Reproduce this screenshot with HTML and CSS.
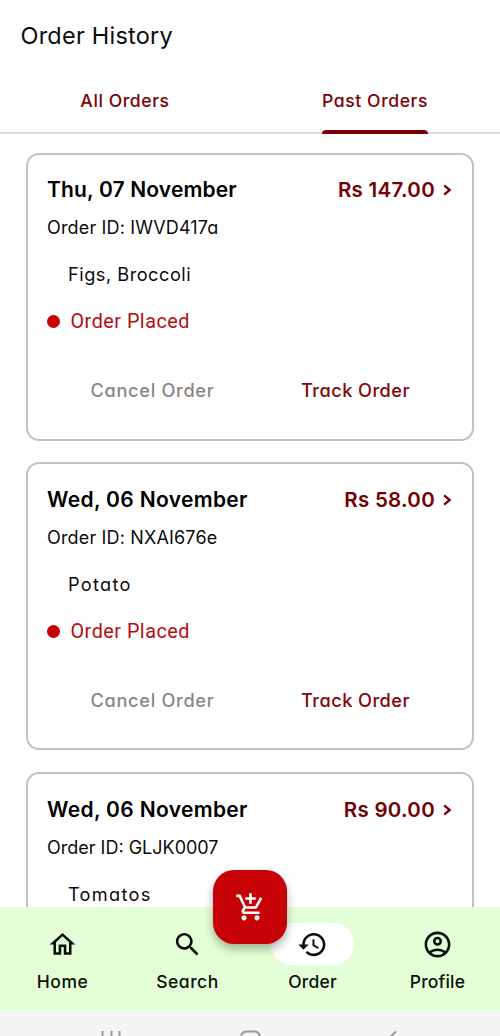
FILE: index.html
```html
<!DOCTYPE html>
<html lang="en">
<head>
    <meta charset="UTF-8">
    <meta name="viewport" content="width=device-width, initial-scale=1.0">
    <title>Order History</title>
    <link rel="stylesheet" href="styles.css">
</head>
<body>
    <div class="app">
        <header class="header">
            <h1>Order History</h1>
        </header>

        <div class="tabs">
            <div class="tab"><span class="tab-label">All Orders</span></div>
            <div class="tab"><span class="tab-label active">Past Orders</span></div>
        </div>

        <main class="orders">
            <div class="order-card">
                <div class="order-top">
                    <h2 class="date-thu">Thu, 07 November</h2>
                    <div class="price"><span>Rs 147.00</span><svg class="chevron" viewBox="0 0 10 12"><path d="M1.2 1.4 L6.7 6 L1.2 10.6"/></svg></div>
                </div>
                <div class="order-id">Order ID: IWVD417a</div>
                <div class="items">Figs, Broccoli</div>
                <div class="order-status"><span class="dot"></span><span>Order Placed</span></div>
                <div class="actions">
                    <button class="cancel-btn" disabled>Cancel Order</button>
                    <button class="track-btn">Track Order</button>
                </div>
            </div>

            <div class="order-card">
                <div class="order-top">
                    <h2>Wed, 06 November</h2>
                    <div class="price"><span>Rs 58.00</span><svg class="chevron" viewBox="0 0 10 12"><path d="M1.2 1.4 L6.7 6 L1.2 10.6"/></svg></div>
                </div>
                <div class="order-id">Order ID: NXAI676e</div>
                <div class="items single">Potato</div>
                <div class="order-status"><span class="dot"></span><span>Order Placed</span></div>
                <div class="actions">
                    <button class="cancel-btn" disabled>Cancel Order</button>
                    <button class="track-btn">Track Order</button>
                </div>
            </div>

            <div class="order-card">
                <div class="order-top">
                    <h2>Wed, 06 November</h2>
                    <div class="price"><span>Rs 90.00</span><svg class="chevron" viewBox="0 0 10 12"><path d="M1.2 1.4 L6.7 6 L1.2 10.6"/></svg></div>
                </div>
                <div class="order-id tight">Order ID: GLJK0007</div>
                <div class="items single">Tomatos</div>
            </div>
        </main>

        <nav class="bottom-nav">
            <div class="nav-item">
                <div class="nav-icon">
                    <svg viewBox="0 0 24 24"><path d="M12 5.69l5 4.5V18h-2v-6H9v6H7v-7.81l5-4.5M12 3L2 12h3v8h6v-6h2v6h6v-8h3L12 3z"/></svg>
                </div>
                <span>Home</span>
            </div>
            <div class="nav-item">
                <div class="nav-icon">
                    <svg viewBox="0 0 24 24"><path d="M15.5 14h-.79l-.28-.27C15.41 12.59 16 11.11 16 9.5 16 5.91 13.09 3 9.5 3S3 5.91 3 9.5 5.91 16 9.5 16c1.61 0 3.09-.59 4.23-1.57l.27.28v.79l5 4.99L20.49 19l-4.99-5zm-6 0C7.01 14 5 11.99 5 9.5S7.01 5 9.5 5 14 7.01 14 9.5 11.99 14 9.5 14z"/></svg>
                </div>
                <span>Search</span>
            </div>
            <div class="nav-item">
                <div class="nav-icon selected">
                    <svg viewBox="0 0 24 24"><path d="M13 3c-4.97 0-9 4.03-9 9H1l3.89 3.89.07.14L9 12H6c0-3.87 3.13-7 7-7s7 3.13 7 7-3.13 7-7 7c-1.93 0-3.68-.79-4.94-2.06l-1.42 1.42C8.27 19.99 10.51 21 13 21c4.97 0 9-4.03 9-9s-4.03-9-9-9zm-1 5v5l4.28 2.54.72-1.21-3.5-2.08V8H12z"/></svg>
                </div>
                <span class="tight">Order</span>
            </div>
            <div class="nav-item">
                <div class="nav-icon">
                    <svg viewBox="0 0 24 24"><path d="M12 2C6.48 2 2 6.48 2 12s4.48 10 10 10 10-4.48 10-10S17.52 2 12 2zM7.35 18.5C8.66 17.56 10.26 17 12 17s3.34.56 4.65 1.5C15.34 19.44 13.74 20 12 20s-3.34-.56-4.65-1.5zm10.79-1.38C16.45 15.8 14.32 15 12 15s-4.45.8-6.14 2.12C4.7 15.73 4 13.95 4 12c0-4.42 3.58-8 8-8s8 3.58 8 8c0 1.95-.7 3.73-1.86 5.12zM12 6c-1.93 0-3.5 1.57-3.5 3.5S10.07 13 12 13s3.5-1.57 3.5-3.5S13.93 6 12 6zm0 5c-.83 0-1.5-.67-1.5-1.5S11.17 8 12 8s1.5.67 1.5 1.5S12.83 11 12 11z"/></svg>
                </div>
                <span class="tight">Profile</span>
            </div>

            <button class="cart-btn" aria-label="Cart">
                <svg viewBox="0 0 24 24"><path d="M11 9h2V6h3V4h-3V1h-2v3H8v2h3v3zm-4 9c-1.1 0-1.99.9-1.99 2S5.9 22 7 22s2-.9 2-2-.9-2-2-2zm10 0c-1.1 0-1.99.9-1.99 2s.89 2 1.99 2 2-.9 2-2-.9-2-2-2zm-8.9-5h7.45c.75 0 1.41-.41 1.75-1.03L21.16 5 19.42 4l-3.87 7H8.53L4.27 2H1v2h2l3.6 7.59-1.35 2.44C4.52 15.37 5.48 17 7 17h12v-2H7l1.1-2z"/></svg>
            </button>
        </nav>

        <!-- Android system buttons -->
        <footer class="system-bar">
            <svg viewBox="0 0 500 25"><path d="M102.5 20V40M111.5 20V40M119.5 20V40M396 20.5L384 32M241 32V27Q241 20.5 247 20.5H254Q260 20.5 260 27V32"/></svg>
        </footer>
    </div>
</body>
</html>
```
FILE: styles.css
```css
* {
    margin: 0;
    padding: 0;
    box-sizing: border-box;
}

body {
    font-family: Inter, sans-serif;
    font-feature-settings: "cv11"; /* single-storey a */
    background: #fff;
    color: #0c0c0c;
}

button {
    font-family: inherit;
    font-feature-settings: inherit;
    border: none;
    background: none;
}

.app {
    display: flex;
    flex-direction: column;
    height: 1036px;
    overflow: hidden;
}

.header {
    height: 70px;
    padding: 0 20.5px;
    flex-shrink: 0;
}

.header h1 {
    font-size: 23.5px;
    font-weight: 400;
    line-height: 72px;
    letter-spacing: 0.22px;
}

/* Tabs */
.tabs {
    display: flex;
    height: 64px;
    flex-shrink: 0;
    border-bottom: 2px solid #dcdcdc;
}

.tab {
    flex: 1;
    display: flex;
    justify-content: center;
}

.tab-label {
    position: relative;
    height: 64px;
    line-height: 62px;
    font-size: 17.6px;
    font-weight: 500;
    letter-spacing: 0.58px;
    color: #7d0003;
    white-space: nowrap;
}

.tab-label.active::after {
    content: "";
    position: absolute;
    left: 0;
    right: 0;
    bottom: 0;
    height: 4px;
    background: #780003;
    border-radius: 4px 4px 0 0;
}

/* Order list */
.orders {
    flex: 1;
    min-height: 0;
    overflow: hidden;
    padding: 18.6px 26px 0;
    display: flex;
    flex-direction: column;
    gap: 21.8px;
}

.order-card {
    height: 288px;
    flex-shrink: 0;
    border: 2px solid #c2c2c2;
    border-radius: 13px;
    padding: 19.35px 19px 0;
}

.order-top {
    display: flex;
    justify-content: space-between;
    height: 32px;
    line-height: 32px;
    white-space: nowrap;
}

.order-top h2 {
    font-size: 21px;
    font-weight: 600;
    letter-spacing: 0.33px;
    color: #000;
}

.order-top .date-thu {
    letter-spacing: 0.15px;
}

.price {
    display: flex;
    align-items: center;
    gap: 8px;
    font-size: 20.5px;
    font-weight: 600;
    letter-spacing: 0.3px;
    color: #750002;
}

.chevron {
    width: 10px;
    height: 12px;
    fill: none;
    stroke: #750002;
    stroke-width: 2.3;
}

.order-id {
    height: 44px;
    line-height: 44px;
    font-size: 18px;
    letter-spacing: 0.16px;
}

.order-id.tight {
    letter-spacing: 0;
}

.items {
    height: 48px;
    line-height: 48px;
    padding-left: 21px;
    font-size: 18.2px;
    letter-spacing: 0.5px;
}

.items.single {
    letter-spacing: 1.3px;
}

.order-status {
    display: flex;
    align-items: center;
    gap: 10.5px;
    height: 48px;
    font-family: Roboto, sans-serif;
    font-size: 19.8px;
    letter-spacing: 0.5px;
    color: #b50d10;
}

.dot {
    width: 13px;
    height: 13px;
    border-radius: 50%;
    background: #c60206;
}

.actions {
    display: flex;
    height: 88px;
    margin: 0 -4px 0 4px;
}

.actions button {
    flex: 1;
    font-size: 18.2px;
    font-weight: 500;
    white-space: nowrap;
}

.actions .cancel-btn {
    color: #878787;
    letter-spacing: 0.68px;
}

.actions .track-btn {
    color: #84060a;
    letter-spacing: 0.45px;
}

/* Bottom navigation */
.bottom-nav {
    position: relative;
    display: flex;
    height: 104px;
    flex-shrink: 0;
    padding-top: 16px;
    background: #e4ffd7;
}

.nav-item {
    flex: 1;
    display: flex;
    flex-direction: column;
    align-items: center;
    font-size: 17.5px;
    font-weight: 500;
    line-height: 34px;
    letter-spacing: 0.5px;
    color: #0b0f09;
}

.nav-item .tight {
    letter-spacing: 0.2px;
}

.nav-icon {
    width: 83px;
    height: 42px;
    border-radius: 21px;
    display: flex;
    align-items: center;
    justify-content: center;
}

.nav-icon.selected {
    background: #fff;
}

.nav-icon svg {
    width: 31px;
    height: 31px;
    fill: #0b0f09;
}

.cart-btn {
    position: absolute;
    top: -37px;
    left: 213px;
    width: 74px;
    height: 74px;
    display: flex;
    align-items: center;
    justify-content: center;
    background: #c60206;
    border-radius: 21px;
    box-shadow: 0 5px 10px rgba(0, 0, 0, 0.3);
}

.cart-btn svg {
    width: 31px;
    height: 31px;
    fill: #fff;
}

.system-bar {
    height: 25px;
    flex-shrink: 0;
    background: #f5f5f5;
}

.system-bar svg {
    display: block;
    width: 500px;
    height: 25px;
    fill: none;
    stroke: #999;
    stroke-width: 2;
}
```
